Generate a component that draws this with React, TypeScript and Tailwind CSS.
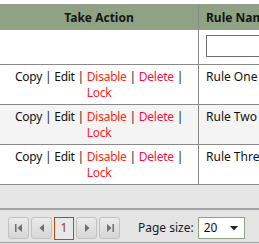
import React from "react";

const font = { fontFamily: '"Noto Sans", "Open Sans", sans-serif' };

function ActionCell() {
  return (
    <div className="w-[198px] flex items-center justify-center text-center text-[12px] leading-[16px] tracking-[-0.25px] px-1">
      <div>
        <span className="text-[#111]">Copy</span>
        <span className="text-[#222]"> | </span>
        <span className="text-[#111]">Edit</span>
        <span className="text-[#222]"> | </span>
        <span className="text-[#ff2a10]">Disable</span>
        <span className="text-[#222]"> | </span>
        <span className="text-[#ff1040]">Delete</span>
        <span className="text-[#222]"> | </span>
        <br />
        <span className="text-[#ff2030]">Lock</span>
      </div>
    </div>
  );
}

function Row({ name, alt }: { name: string; alt?: boolean }) {
  return (
    <div className={`flex h-[40px] border-b border-[#8a8a8a] ${alt ? "bg-[#f4f4f4]" : "bg-white"}`}>
      <ActionCell />
      <div className="w-px bg-[#8a8a8a]" />
      <div className="flex-1 pl-[7px] pt-[4px] text-[12px] leading-[16px] text-[#111] whitespace-nowrap">{name}</div>
    </div>
  );
}

function PagerBtn({ children }: { children: React.ReactNode }) {
  return (
    <div className="w-[21px] h-[22px] rounded-[3px] border border-[#c2c2c2] bg-gradient-to-b from-[#ebebeb] to-[#d6d6d6] flex items-center justify-center">
      {children}
    </div>
  );
}

export default function App() {
  return (
    <div className="w-[259px] h-[244px] overflow-hidden bg-white" style={font}>
      <div className="w-[340px]">
        <div className="h-[4px] bg-white" />
        {/* header */}
        <div className="flex h-[26px] border-t border-[#9a9a9a] bg-[#8fa284]">
          <div className="w-[198px] flex items-center justify-center font-bold text-[12px] text-[#151515]">Take Action</div>
          <div className="w-px bg-[#8a8a8a]" />
          <div className="flex-1 pl-[7px] flex items-center font-bold text-[12px] text-[#151515] whitespace-nowrap">Rule Name</div>
        </div>
        {/* filter row */}
        <div className="flex h-[35px] border-b border-[#8a8a8a] bg-white">
          <div className="w-[198px]" />
          <div className="w-px bg-[#8a8a8a]" />
          <div className="flex-1 pl-[7px] pt-[5px]">
            <div className="w-[120px] h-[22px] border border-[#6e6e6e] bg-white" />
          </div>
        </div>
        <Row name="Rule One" />
        <Row name="Rule Two" alt />
        <Row name="Rule Three" />
        {/* footer */}
        <div className="h-[23px] bg-[#e6e6e6]" />
        <div className="h-[2px] bg-[#a3a3a3]" />
        <div className="h-[32px] bg-[#e4e4e4] flex items-center pl-[8px] pt-[4px]">
          <div className="flex gap-[2px] items-center">
            <PagerBtn>
              <svg width="10" height="10" viewBox="0 0 10 10">
                <rect x="1" y="1" width="1.5" height="8" fill="#6f6f6f" />
                <path d="M8 1 L3.5 5 L8 9 Z" fill="#6f6f6f" />
              </svg>
            </PagerBtn>
            <PagerBtn>
              <svg width="10" height="10" viewBox="0 0 10 10">
                <path d="M7 1 L2.5 5 L7 9 Z" fill="#6f6f6f" />
              </svg>
            </PagerBtn>
            <div className="w-[20px] h-[23px] border border-[#c8460c] bg-[#e8e8e8] flex items-center justify-center text-[12px] text-[#9c3c10]">1</div>
            <PagerBtn>
              <svg width="10" height="10" viewBox="0 0 10 10">
                <path d="M3 1 L7.5 5 L3 9 Z" fill="#6f6f6f" />
              </svg>
            </PagerBtn>
            <PagerBtn>
              <svg width="10" height="10" viewBox="0 0 10 10">
                <path d="M2 1 L6.5 5 L2 9 Z" fill="#6f6f6f" />
                <rect x="7.5" y="1" width="1.5" height="8" fill="#6f6f6f" />
              </svg>
            </PagerBtn>
          </div>
          <div className="ml-[18px] text-[12px] text-[#1a1a2a] whitespace-nowrap">Page size:</div>
          <div className="ml-[4px] w-[47px] h-[22px] border border-[#8fa284] bg-white flex items-center pl-[5px] pr-[6px] justify-between">
            <span className="text-[12px] text-[#111]">20</span>
            <svg width="8" height="5" viewBox="0 0 8 5">
              <path d="M0 0 L8 0 L4 4.5 Z" fill="#222" />
            </svg>
          </div>
        </div>
        <div className="h-[1px] bg-[#a3a3a3]" />
        <div className="h-[10px] bg-[#e4e4e4]" />
      </div>
    </div>
  );
}
